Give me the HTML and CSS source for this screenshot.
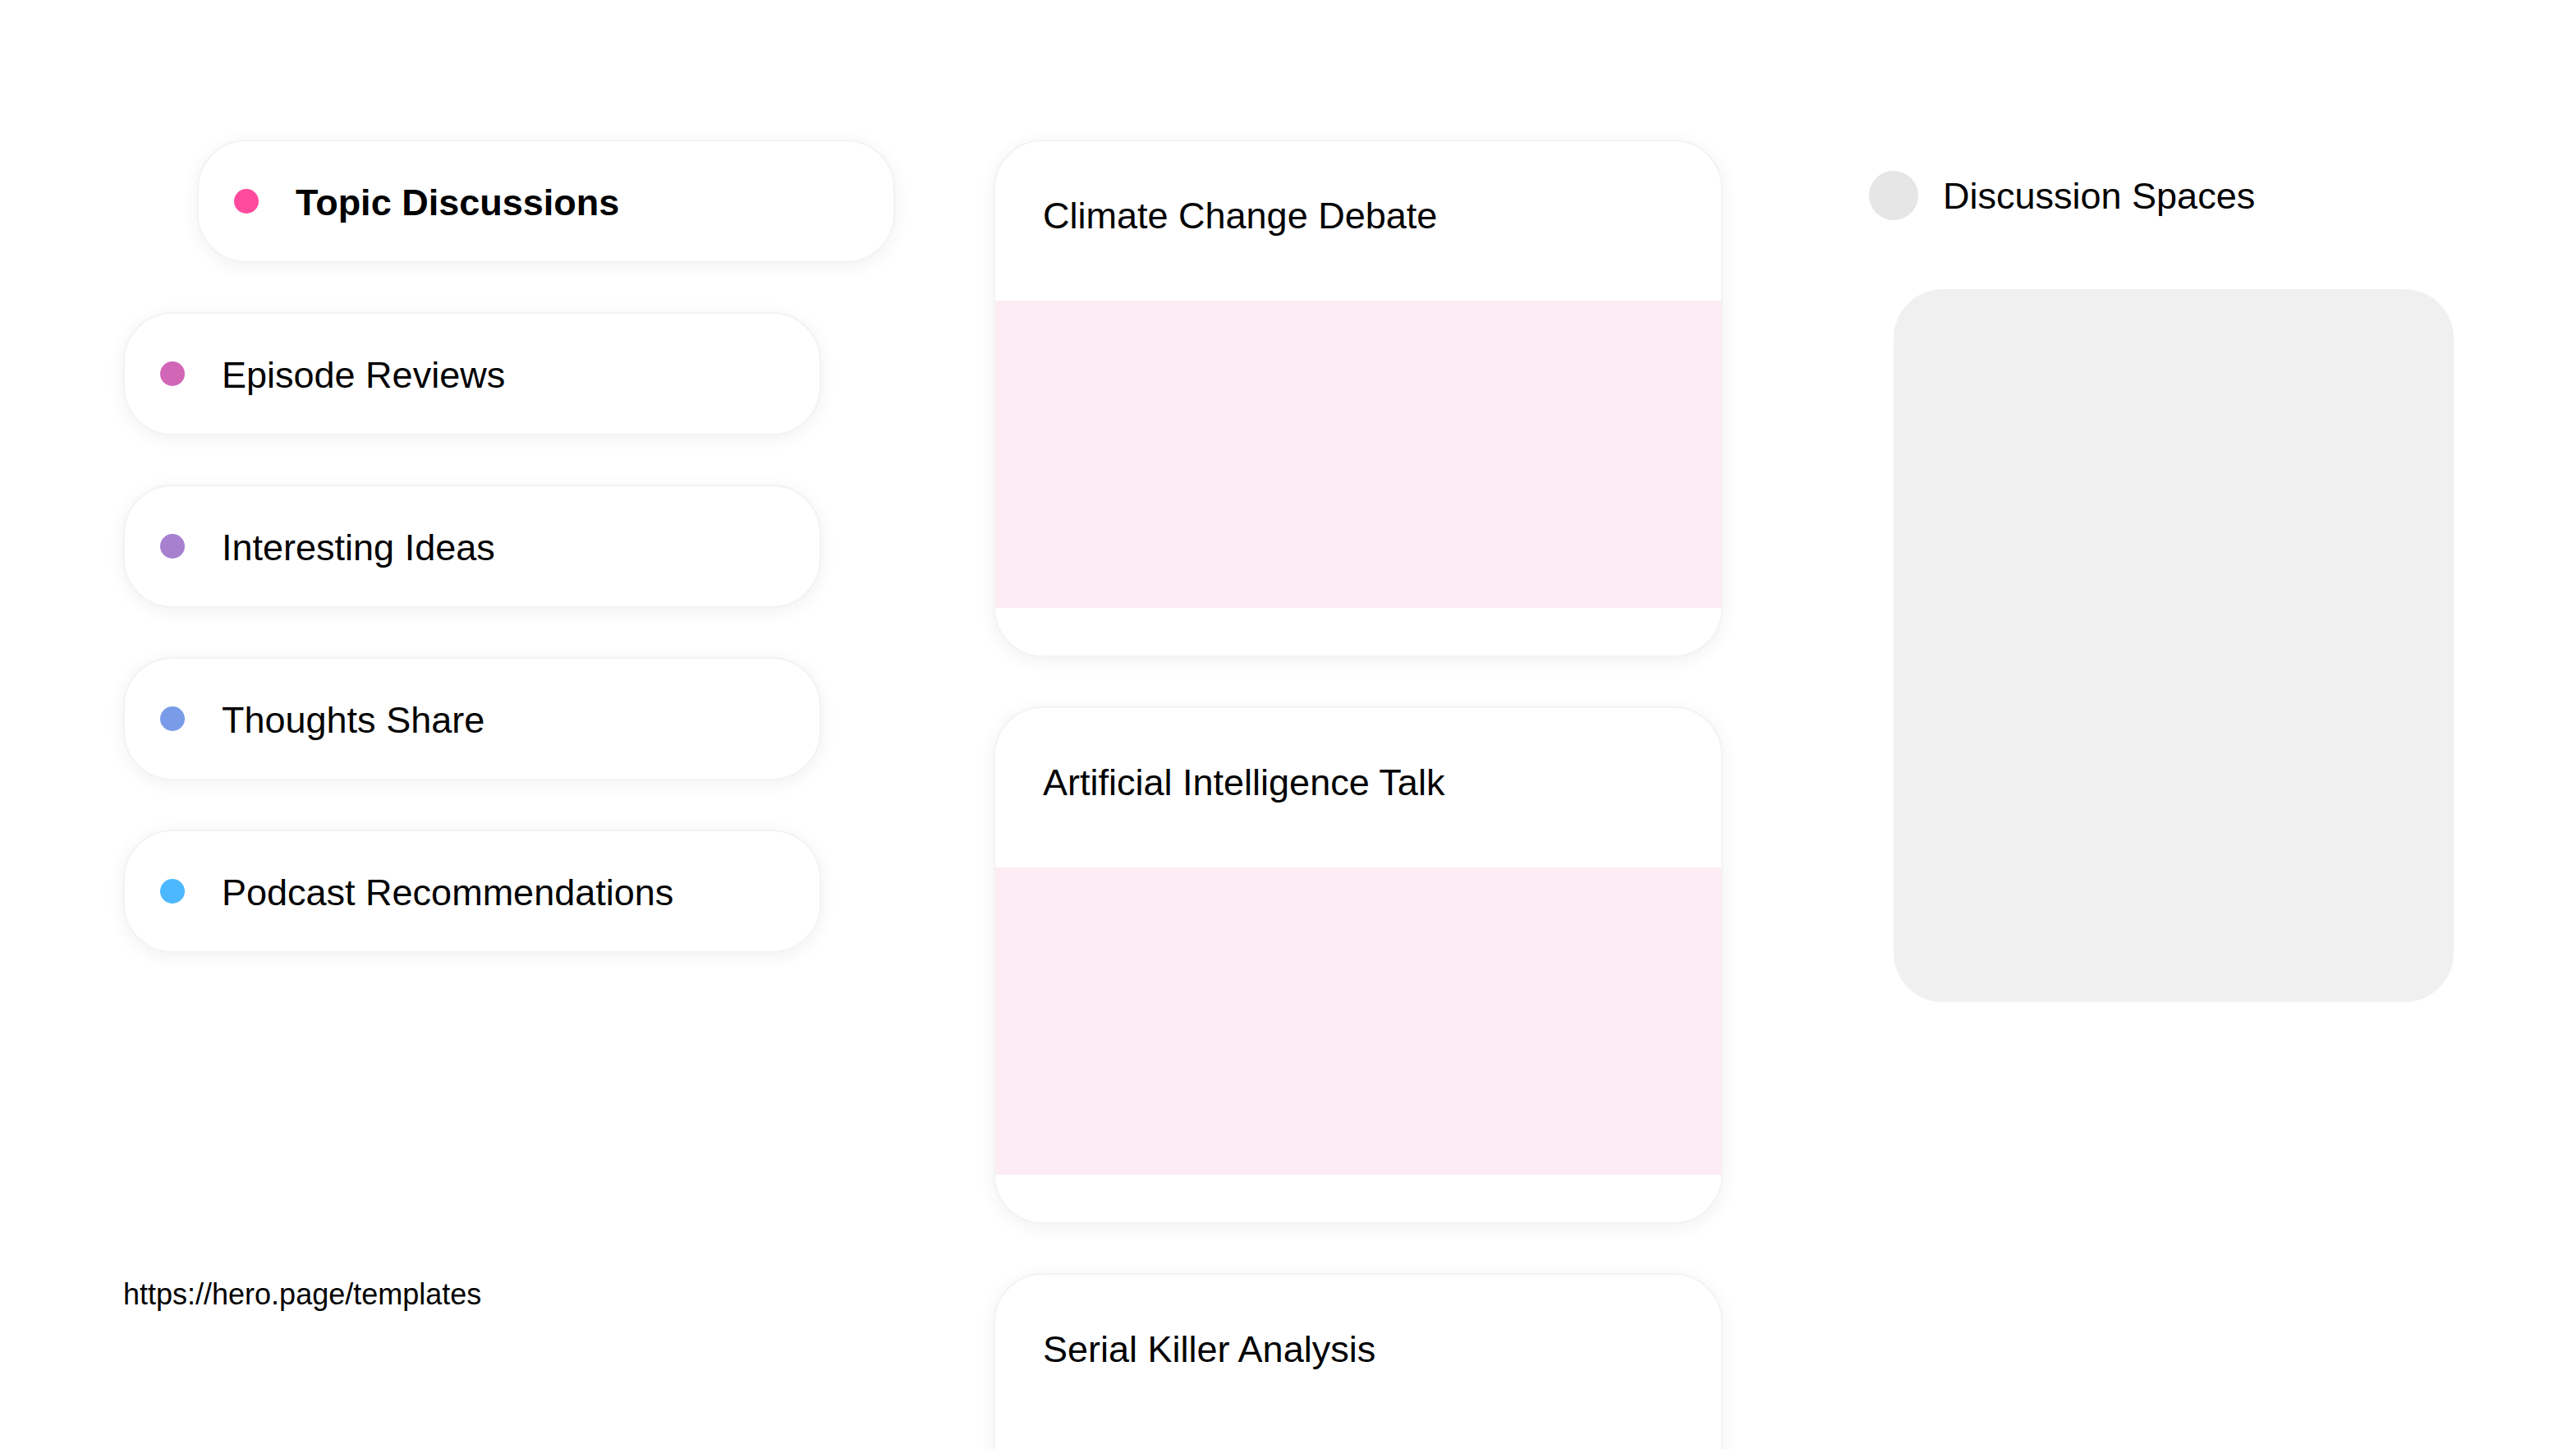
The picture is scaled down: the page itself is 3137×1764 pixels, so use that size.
FILE: index.html
```html
<!DOCTYPE html>
<html lang="en">
<head>
<meta charset="utf-8">
<title>Topic Discussions</title>
<link rel="stylesheet" href="styles.css">
</head>
<body>
<div class="page">
  <div class="col-left">
    <ul class="topics">
      <li class="pill pill-active"><span class="dot dot-pink"></span><span class="pill-label">Topic Discussions</span></li>
      <li class="pill"><span class="dot dot-orchid"></span><span class="pill-label">Episode Reviews</span></li>
      <li class="pill"><span class="dot dot-lavender"></span><span class="pill-label">Interesting Ideas</span></li>
      <li class="pill"><span class="dot dot-periwinkle"></span><span class="pill-label">Thoughts Share</span></li>
      <li class="pill"><span class="dot dot-sky"></span><span class="pill-label">Podcast Recommendations</span></li>
    </ul>
    <div class="url">https://hero.page/templates</div>
  </div>
  <div class="col-mid">
    <div class="card">
      <div class="card-title">Climate Change Debate</div>
      <div class="card-media"></div>
      <div class="card-foot"></div>
    </div>
    <div class="card">
      <div class="card-title">Artificial Intelligence Talk</div>
      <div class="card-media"></div>
      <div class="card-foot"></div>
    </div>
    <div class="card">
      <div class="card-title">Serial Killer Analysis</div>
      <div class="card-foot"></div>
    </div>
  </div>
  <div class="col-right">
    <div class="space-head"><span class="space-dot"></span><span class="space-title">Discussion Spaces</span></div>
    <div class="space-box"></div>
  </div>
</div>
</body>
</html>
```
FILE: styles.css
```css
html, body {
  margin: 0;
  padding: 0;
  background: #ffffff;
  overflow: hidden;
  height: 1764px;
}
body {
  font-family: "Liberation Sans", Arial, sans-serif;
  color: #000000;
}
.page {
  display: flex;
  align-items: flex-start;
  padding: 170px 0 0 150px;
}
.col-left {
  width: 850px;
  display: flex;
  flex-direction: column;
}
.topics {
  list-style: none;
  margin: 0;
  padding: 0;
  display: flex;
  flex-direction: column;
  gap: 60px;
}
.pill {
  box-sizing: border-box;
  width: 850px;
  height: 150px;
  border-radius: 60px;
  background: #ffffff;
  border: 2px solid #f3f3f3;
  box-shadow: 0 4px 22px rgba(0, 0, 0, 0.06);
  display: flex;
  align-items: center;
  padding-left: 43px;
  gap: 45px;
}
.pill-active {
  margin-left: 90px;
}
.pill-label {
  font-size: 45px;
  line-height: 1;
  padding-top: 2px;
}
.pill-active .pill-label {
  font-weight: 700;
}
.dot {
  width: 30px;
  height: 30px;
  border-radius: 50%;
  flex: none;
}
.dot-pink { background: #ff4a9d; }
.dot-orchid { background: #d166b7; }
.dot-lavender { background: #a780d0; }
.dot-periwinkle { background: #7a9ce8; }
.dot-sky { background: #4bb8ff; }
.url {
  margin-top: 395px;
  font-size: 36px;
  line-height: 42px;
}
.col-mid {
  margin-left: 210px;
  width: 888px;
  display: flex;
  flex-direction: column;
  gap: 60px;
}
.card {
  box-sizing: border-box;
  width: 888px;
  height: 630px;
  border-radius: 60px;
  background: #ffffff;
  border: 2px solid #f3f3f3;
  box-shadow: 0 4px 22px rgba(0, 0, 0, 0.06);
  overflow: hidden;
  display: flex;
  flex-direction: column;
  flex: none;
}
.card-title {
  box-sizing: border-box;
  height: 194px;
  padding: 58px 60px 0 58px;
  font-size: 45px;
  line-height: 66px;
}
.card-media {
  height: 374px;
  background: #fdecf4;
}
.card-foot {
  flex: 1;
}
.col-right {
  margin-left: 178px;
  padding-top: 38px;
  display: flex;
  flex-direction: column;
}
.space-head {
  display: flex;
  align-items: center;
  gap: 30px;
  height: 60px;
}
.space-dot {
  width: 60px;
  height: 60px;
  border-radius: 50%;
  background: #e6e6e6;
  flex: none;
}
.space-title {
  font-size: 45px;
  line-height: 1;
}
.space-box {
  margin-top: 84px;
  margin-left: 30px;
  width: 682px;
  height: 868px;
  border-radius: 60px;
  background: #f0f0f0;
}
```
